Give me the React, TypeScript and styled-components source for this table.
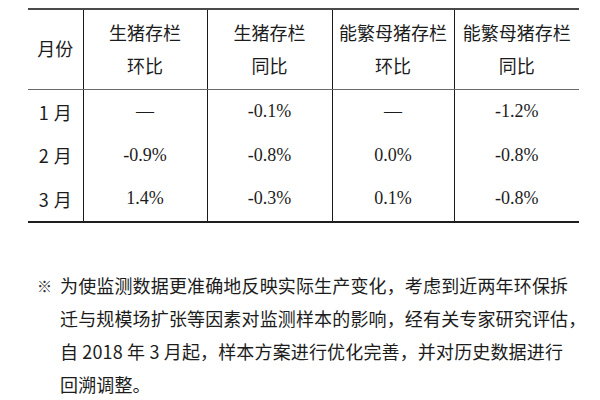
import styled, { createGlobalStyle } from "styled-components";

const GlobalStyle = createGlobalStyle`
    html, body {
        margin: 0;
        padding: 0;
        background: #ffffff;
    }
    body {
        font-family: "Noto Sans CJK SC", "Noto Sans", sans-serif;
        color: #1c1c1c;
    }
`;

interface RowData {
    month: string;
    values: string[];
}

const rows: RowData[] = [
    { month: "1 月", values: ["—", "-0.1%", "—", "-1.2%"] },
    { month: "2 月", values: ["-0.9%", "-0.8%", "0.0%", "-0.8%"] },
    { month: "3 月", values: ["1.4%", "-0.3%", "0.1%", "-0.8%"] },
];

const headers: [string, string][] = [
    ["生猪存栏", "环比"],
    ["生猪存栏", "同比"],
    ["能繁母猪存栏", "环比"],
    ["能繁母猪存栏", "同比"],
];

const colWidths = [55, 124, 125, 122, 125];

const Page = styled.div`
    width: 600px;
    height: 400px;
    overflow: hidden;
    padding-top: 8px;
    box-sizing: border-box;
`;

const Table = styled.table`
    margin-left: 28px;
    width: 551px;
    border-collapse: collapse;
    table-layout: fixed;
    border-top: 2px solid #4a4a4a;
    border-bottom: 2px solid #1e1e1e;
`;

const HeadCell = styled.th<{ $first?: boolean }>`
    height: 77px;
    padding: 0 0 2px 0;
    font-weight: normal;
    font-size: 18px;
    line-height: 33px;
    text-align: center;
    vertical-align: middle;
    white-space: nowrap;
    border-bottom: 1px solid #6a6a6a;
    border-left: ${(p) => (p.$first ? "none" : "1.5px solid #1a1a1a")};
`;

const HeadLine = styled.span`
    display: block;
`;

const MonthCell = styled.td`
    height: 43.5px;
    padding: 0;
    font-size: 18px;
    word-spacing: 1px;
    text-align: center;
    vertical-align: middle;
    white-space: pre;
`;

const ValueCell = styled.td`
    padding: 0;
    font-family: "Liberation Serif", "Times New Roman", serif;
    font-size: 18px;
    text-align: center;
    vertical-align: middle;
    border-left: 1.5px solid #1a1a1a;
`;

const Note = styled.div`
    display: flex;
    margin-top: 46px;
    padding-left: 37px;
    font-size: 18px;
    line-height: 33px;
    letter-spacing: 0.15px;
`;

const Marker = styled.span`
    width: 23px;
    flex: none;
    font-size: 15px;
    color: #333;
`;

const NoteText = styled.p`
    margin: 0;
    white-space: nowrap;
`;

export default function App() {
    return (
        <Page>
            <GlobalStyle />
            <Table>
                <colgroup>
                    {colWidths.map((w, i) => (
                        <col key={i} style={{ width: w }} />
                    ))}
                </colgroup>
                <thead>
                    <tr>
                        <HeadCell $first>月份</HeadCell>
                        {headers.map(([a, b], i) => (
                            <HeadCell key={i}>
                                <HeadLine>{a}</HeadLine>
                                <HeadLine>{b}</HeadLine>
                            </HeadCell>
                        ))}
                    </tr>
                </thead>
                <tbody>
                    {rows.map((row) => (
                        <tr key={row.month}>
                            <MonthCell>{row.month}</MonthCell>
                            {row.values.map((v, i) => (
                                <ValueCell key={i}>{v}</ValueCell>
                            ))}
                        </tr>
                    ))}
                </tbody>
            </Table>
            <Note>
                <Marker>※</Marker>
                <NoteText>
                    为使监测数据更准确地反映实际生产变化，考虑到近两年环保拆
                    <br />
                    迁与规模场扩张等因素对监测样本的影响，经有关专家研究评估，
                    <br />
                    自 2018 年 3 月起，样本方案进行优化完善，并对历史数据进行
                    <br />
                    回溯调整。
                </NoteText>
            </Note>
        </Page>
    );
}
